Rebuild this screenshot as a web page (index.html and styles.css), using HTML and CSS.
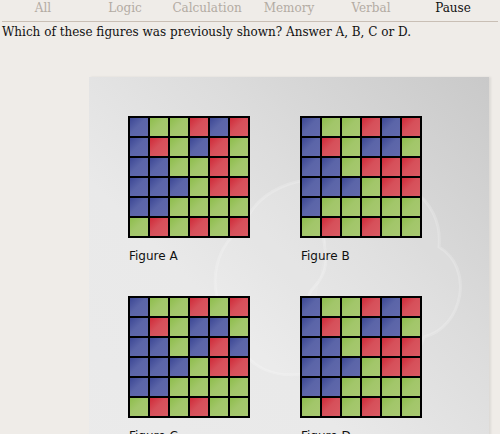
FILE: index.html
```html
<!DOCTYPE html>
<html>
<head>
    <title>Memory - Figures</title>
    <link rel="stylesheet" href="styles.css">
</head>
<body>
    <div class="tabs">
        <span class="tab">All</span>
        <span class="tab">Logic</span>
        <span class="tab">Calculation</span>
        <span class="tab">Memory</span>
        <span class="tab">Verbal</span>
        <span class="tab current">Pause</span>
    </div>

    <p class="question">Which of these figures was previously shown? Answer A, B, C or D.</p>

    <div class="panel">
        <svg class="watermark" width="300" height="260" viewBox="0 0 300 260">
            <path d="M60 70 C70 30 130 10 170 30 C210 10 260 40 255 90 C290 110 280 170 240 180 C230 220 170 230 140 210 C100 230 50 210 55 170 C20 150 25 90 60 70 Z" />
            <path d="M150 40 C120 70 160 100 130 130 C110 150 150 180 120 210" />
        </svg>
        <div class="figures">
            <div class="figure">
                <div class="grid" data-cells="BGGRBR BRGBRG BBGGRG BBBGRR BBGGGG GRGRGR"></div>
                <div class="label">Figure A</div>
            </div>
            <div class="figure">
                <div class="grid" data-cells="BGGRBR BRGBBG BBGRRR BBBGRR BGGGGG GRGRGG"></div>
                <div class="label">Figure B</div>
            </div>
            <div class="figure">
                <div class="grid" data-cells="BGGRGR BRGBBG BBGBRB BBBGRR BBGGGG GRGRGG"></div>
                <div class="label">Figure C</div>
            </div>
            <div class="figure">
                <div class="grid" data-cells="BGGRBR BRGBBG BBGRRR BBBGRR BBGGGG GRGRGG"></div>
                <div class="label">Figure D</div>
            </div>
        </div>
    </div>

    <script>
        const colors = { B: 'blue', R: 'red', G: 'green' };
        document.querySelectorAll('.grid').forEach(grid => {
            const rows = grid.dataset.cells.split(' ');
            rows.forEach(row => {
                row.split('').forEach(c => {
                    const cell = document.createElement('div');
                    cell.className = 'cell ' + colors[c];
                    grid.appendChild(cell);
                });
            });
        });
    </script>
</body>
</html>
```

FILE: styles.css
```css
body {
    margin: 0;
    padding: 0 2px;
    background: #efece8;
    color: #111;
    font-family: "DejaVu Serif", serif;
    font-size: 12px;
}
.tabs {
    display: flex;
    margin-top: 1px;
    padding-bottom: 6px;
    border-bottom: 1px solid #c9bfb5;
}
.tab {
    width: 82px;
    text-align: center;
    color: #b3aba3;
}
.tab.current {
    color: #111;
}
.question {
    margin: 3px 0 0;
}
.panel {
    position: relative;
    width: 361px;
    height: 400px;
    margin: 38px 0 0 87px;
    padding: 39px 0 0 39px;
    background: linear-gradient(225deg, #c9c9c9 0%, #dddddd 35%, #e9e9e9 60%, #ebebeb 100%);
    box-shadow: 2px 0 2px rgba(0, 0, 0, 0.08);
}
.watermark {
    position: absolute;
    left: 95px;
    top: 80px;
}
.watermark path {
    fill: rgba(255, 255, 255, 0.1);
    stroke: rgba(255, 255, 255, 0.2);
    stroke-width: 3;
}
.figures {
    position: relative;
    display: grid;
    grid-template-columns: 122px 122px;
    column-gap: 50px;
}
.figure {
    height: 180px;
}
.grid {
    display: grid;
    grid-template-columns: repeat(6, 18px);
    gap: 2px;
    padding: 2px;
    background: #000;
    width: 118px;
}
.cell {
    height: 18px;
}
.blue {
    background: linear-gradient(135deg, #3c4795 0%, #5b65a8 45%, #6269ac 100%);
}
.red {
    background: linear-gradient(135deg, #d02a38 0%, #d6505a 45%, #da5a62 100%);
}
.green {
    background: linear-gradient(135deg, #8ebe4c 0%, #a2c66a 45%, #a8c870 100%);
}
.label {
    margin-top: 11px;
    padding-left: 1px;
    font-family: "DejaVu Sans", sans-serif;
    font-size: 12px;
    color: #111;
}
```
